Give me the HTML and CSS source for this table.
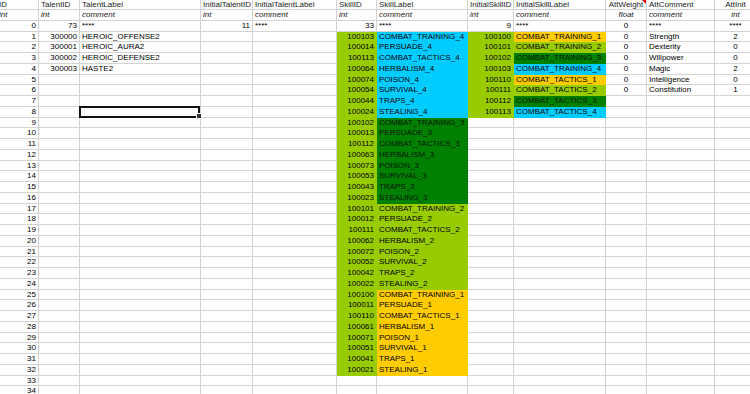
FILE: index.html
```html
<!DOCTYPE html>
<html>
<head>
<meta charset="utf-8">
<link rel="stylesheet" href="styles.css">
</head>
<body>
<div class="sheet">
<div class="row hd"><div>ID</div><div>TalentID</div><div>TalentLabel</div><div>InitialTalentID</div><div>InitialTalentLabel</div><div>SkillID</div><div>SkillLabel</div><div>InitialSkillID</div><div>InitialSkillLabel</div><div class="note">AttWeight</div><div>AttComment</div><div>AttInit</div></div>
<div class="row ty"><div>int</div><div>int</div><div>comment</div><div>int</div><div>comment</div><div>int</div><div>comment</div><div>int</div><div>comment</div><div>float</div><div>comment</div><div>int</div></div>
<div class="row"><div>0</div><div>73</div><div>****</div><div>11</div><div>****</div><div>33</div><div>****</div><div>9</div><div>****</div><div>0</div><div>****</div><div>****</div></div>
<div class="row"><div>1</div><div>300000</div><div>HEROIC_OFFENSE2</div><div></div><div></div><div class="l">100103</div><div class="c">COMBAT_TRAINING_4</div><div class="l">100100</div><div class="o">COMBAT_TRAINING_1</div><div>0</div><div>Strength</div><div>2</div></div>
<div class="row"><div>2</div><div>300001</div><div>HEROIC_AURA2</div><div></div><div></div><div class="l">100014</div><div class="c">PERSUADE_4</div><div class="l">100101</div><div class="l">COMBAT_TRAINING_2</div><div>0</div><div>Dexterity</div><div>0</div></div>
<div class="row"><div>3</div><div>300002</div><div>HEROIC_DEFENSE2</div><div></div><div></div><div class="l">100113</div><div class="c">COMBAT_TACTICS_4</div><div class="l">100102</div><div class="g">COMBAT_TRAINING_3</div><div>0</div><div>Willpower</div><div>0</div></div>
<div class="row"><div>4</div><div>300003</div><div>HASTE2</div><div></div><div></div><div class="l">100064</div><div class="c">HERBALISM_4</div><div class="l">100103</div><div class="c">COMBAT_TRAINING_4</div><div>0</div><div>Magic</div><div>2</div></div>
<div class="row"><div>5</div><div></div><div></div><div></div><div></div><div class="l">100074</div><div class="c">POISON_4</div><div class="l">100110</div><div class="o">COMBAT_TACTICS_1</div><div>0</div><div>Intelligence</div><div>0</div></div>
<div class="row"><div>6</div><div></div><div></div><div></div><div></div><div class="l">100054</div><div class="c">SURVIVAL_4</div><div class="l">100111</div><div class="l">COMBAT_TACTICS_2</div><div>0</div><div>Constitution</div><div>1</div></div>
<div class="row"><div>7</div><div></div><div></div><div></div><div></div><div class="l">100044</div><div class="c">TRAPS_4</div><div class="l">100112</div><div class="g">COMBAT_TACTICS_3</div><div></div><div></div><div></div></div>
<div class="row"><div>8</div><div></div><div class="sel"></div><div></div><div></div><div class="l">100024</div><div class="c">STEALING_4</div><div class="l">100113</div><div class="c">COMBAT_TACTICS_4</div><div></div><div></div><div></div></div>
<div class="row"><div>9</div><div></div><div></div><div></div><div></div><div class="l">100102</div><div class="g">COMBAT_TRAINING_3</div><div></div><div></div><div></div><div></div><div></div></div>
<div class="row"><div>10</div><div></div><div></div><div></div><div></div><div class="l">100013</div><div class="g">PERSUADE_3</div><div></div><div></div><div></div><div></div><div></div></div>
<div class="row"><div>11</div><div></div><div></div><div></div><div></div><div class="l">100112</div><div class="g">COMBAT_TACTICS_3</div><div></div><div></div><div></div><div></div><div></div></div>
<div class="row"><div>12</div><div></div><div></div><div></div><div></div><div class="l">100063</div><div class="g">HERBALISM_3</div><div></div><div></div><div></div><div></div><div></div></div>
<div class="row"><div>13</div><div></div><div></div><div></div><div></div><div class="l">100073</div><div class="g">POISON_3</div><div></div><div></div><div></div><div></div><div></div></div>
<div class="row"><div>14</div><div></div><div></div><div></div><div></div><div class="l">100053</div><div class="g">SURVIVAL_3</div><div></div><div></div><div></div><div></div><div></div></div>
<div class="row"><div>15</div><div></div><div></div><div></div><div></div><div class="l">100043</div><div class="g">TRAPS_3</div><div></div><div></div><div></div><div></div><div></div></div>
<div class="row"><div>16</div><div></div><div></div><div></div><div></div><div class="l">100023</div><div class="g">STEALING_3</div><div></div><div></div><div></div><div></div><div></div></div>
<div class="row"><div>17</div><div></div><div></div><div></div><div></div><div class="l">100101</div><div class="l">COMBAT_TRAINING_2</div><div></div><div></div><div></div><div></div><div></div></div>
<div class="row"><div>18</div><div></div><div></div><div></div><div></div><div class="l">100012</div><div class="l">PERSUADE_2</div><div></div><div></div><div></div><div></div><div></div></div>
<div class="row"><div>19</div><div></div><div></div><div></div><div></div><div class="l">100111</div><div class="l">COMBAT_TACTICS_2</div><div></div><div></div><div></div><div></div><div></div></div>
<div class="row"><div>20</div><div></div><div></div><div></div><div></div><div class="l">100062</div><div class="l">HERBALISM_2</div><div></div><div></div><div></div><div></div><div></div></div>
<div class="row"><div>21</div><div></div><div></div><div></div><div></div><div class="l">100072</div><div class="l">POISON_2</div><div></div><div></div><div></div><div></div><div></div></div>
<div class="row"><div>22</div><div></div><div></div><div></div><div></div><div class="l">100052</div><div class="l">SURVIVAL_2</div><div></div><div></div><div></div><div></div><div></div></div>
<div class="row"><div>23</div><div></div><div></div><div></div><div></div><div class="l">100042</div><div class="l">TRAPS_2</div><div></div><div></div><div></div><div></div><div></div></div>
<div class="row"><div>24</div><div></div><div></div><div></div><div></div><div class="l">100022</div><div class="l">STEALING_2</div><div></div><div></div><div></div><div></div><div></div></div>
<div class="row"><div>25</div><div></div><div></div><div></div><div></div><div class="l">100100</div><div class="o">COMBAT_TRAINING_1</div><div></div><div></div><div></div><div></div><div></div></div>
<div class="row"><div>26</div><div></div><div></div><div></div><div></div><div class="l">100011</div><div class="o">PERSUADE_1</div><div></div><div></div><div></div><div></div><div></div></div>
<div class="row"><div>27</div><div></div><div></div><div></div><div></div><div class="l">100110</div><div class="o">COMBAT_TACTICS_1</div><div></div><div></div><div></div><div></div><div></div></div>
<div class="row"><div>28</div><div></div><div></div><div></div><div></div><div class="l">100061</div><div class="o">HERBALISM_1</div><div></div><div></div><div></div><div></div><div></div></div>
<div class="row"><div>29</div><div></div><div></div><div></div><div></div><div class="l">100071</div><div class="o">POISON_1</div><div></div><div></div><div></div><div></div><div></div></div>
<div class="row"><div>30</div><div></div><div></div><div></div><div></div><div class="l">100051</div><div class="o">SURVIVAL_1</div><div></div><div></div><div></div><div></div><div></div></div>
<div class="row"><div>31</div><div></div><div></div><div></div><div></div><div class="l">100041</div><div class="o">TRAPS_1</div><div></div><div></div><div></div><div></div><div></div></div>
<div class="row"><div>32</div><div></div><div></div><div></div><div></div><div class="l">100021</div><div class="o">STEALING_1</div><div></div><div></div><div></div><div></div><div></div></div>
<div class="row"><div>33</div><div></div><div></div><div></div><div></div><div></div><div></div><div></div><div></div><div></div><div></div><div></div></div>
<div class="row"><div>34</div><div></div><div></div><div></div><div></div><div></div><div></div><div></div><div></div><div></div><div></div><div></div></div>
</div>
</body>
</html>
```

FILE: styles.css
```css
html, body {
  margin: 0;
  padding: 0;
  background: #ffffff;
  overflow: hidden;
}

body {
  font-family: "Liberation Sans", Arial, sans-serif;
  font-size: 8px;
  color: #000000;
}

.sheet {
  display: flex;
  flex-direction: column;
  margin-left: -1px;
  width: 770px;
}

.row {
  display: grid;
  grid-template-columns: 40px 41px 121px 52px 84px 40px 91px 46px 92px 41px 68px 42px;
  height: 10.75px;
}

.row > div {
  box-sizing: border-box;
  border-right: 1px solid #d4d4d4;
  border-bottom: 1px solid #d4d4d4;
  padding: 0 2px;
  line-height: 9.75px;
  white-space: nowrap;
  overflow: hidden;
}

.row > div:nth-child(1),
.row > div:nth-child(2),
.row > div:nth-child(4),
.row > div:nth-child(6),
.row > div:nth-child(8) {
  text-align: right;
}

.row > div:nth-child(10),
.row > div:nth-child(12) {
  text-align: center;
}

.row.hd,
.row.ty {
  color: #222222;
}

.row.hd > div:nth-child(1),
.row.hd > div:nth-child(2),
.row.hd > div:nth-child(4),
.row.hd > div:nth-child(6),
.row.hd > div:nth-child(8),
.row.ty > div:nth-child(1),
.row.ty > div:nth-child(2),
.row.ty > div:nth-child(4),
.row.ty > div:nth-child(6),
.row.ty > div:nth-child(8) {
  text-align: left;
}

.row.hd > div:nth-child(1),
.row.ty > div:nth-child(1) {
  padding-left: 0;
}

.row.hd {
  height: 10px;
}

.row.hd > div {
  line-height: 9px;
}

.row.ty > div {
  font-style: italic;
}

.row > div.l {
  background: #99cc00;
  border-color: #99cc00;
}

.row > div.c {
  background: #00ccff;
  border-color: #00ccff;
}

.row > div.g {
  background: #008000;
  border-color: #008000;
  color: #0a140a;
}

.row > div.o {
  background: #ffcc00;
  border-color: #ffcc00;
}

.row > div.note {
  position: relative;
}

.row > div.note::after {
  content: "";
  position: absolute;
  top: 0;
  right: 0;
  border-top: 4px solid #e00000;
  border-left: 4px solid transparent;
}

.row > div.sel {
  position: relative;
  overflow: visible;
}

.row > div.sel::after {
  content: "";
  position: absolute;
  left: -1px;
  top: -0.5px;
  right: 0;
  bottom: -1px;
  border: 2px solid #111111;
}

.row > div.sel::before {
  content: "";
  position: absolute;
  right: -2px;
  bottom: -2px;
  width: 4px;
  height: 4px;
  background: #333333;
  border: 1px solid #ffffff;
  z-index: 2;
}
```
